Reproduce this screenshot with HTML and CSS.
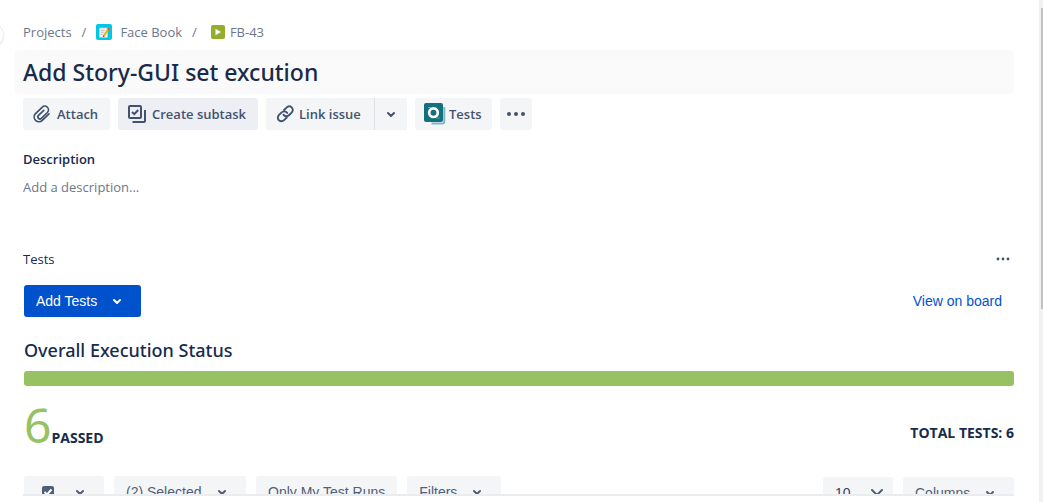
FILE: index.html
```html
<!DOCTYPE html>
<html lang="en">
<head>
<meta charset="utf-8">
<meta name="viewport" content="width=device-width, initial-scale=1">
<title>FB-43 Add Story-GUI set excution</title>
<link rel="stylesheet" href="styles.css">
</head>
<body>
<div class="page">
  <button class="nav-handle" aria-label="Expand sidebar"></button>
  <main class="issue">
    <nav class="crumbs" aria-label="Breadcrumbs">
      <a href="#">Projects</a>
      <span class="slash">/</span>
      <a href="#" class="crumb-project">
        <svg width="16" height="16" viewBox="0 0 16 16" aria-hidden="true"><rect width="16" height="16" rx="2" fill="#00c7e6"/><path d="M3.400 3.500h8.200v10H3.400z" fill="#f2f4f5"/><path d="M4 3v1.200M6 3v1.200M8 3v1.200M10 3v1.200" stroke="#6b778c" stroke-width=".8"/><path d="M4.800 6.300h4M4.800 8.300h3M4.800 10.300h2" stroke="#a5b4c2" stroke-width=".8"/><path d="M7 11.200l4.200-6.400 1.700 1.100-4.200 6.400-2 1z" fill="#ffab00"/><path d="M11.200 4.800l.8-1.200 1.700 1.100-.8 1.200z" fill="#e5493a"/><path d="M7 11.200l-.3 2 2-.9z" fill="#7a5b3a"/></svg>
        <span>Face Book</span>
      </a>
      <span class="slash slash-wide">/</span>
      <a href="#" class="crumb-issue">
        <svg width="14" height="14" viewBox="0 0 14 14" aria-hidden="true"><rect width="14" height="14" rx="2" fill="#95ad2d"/><path d="M4.500 3.800v6.400L10 7z" fill="#fff"/></svg>
        <span>FB-43</span>
      </a>
    </nav>

    <h1 class="title">Add Story-GUI set excution</h1>

    <div class="actions">
      <button class="btn btn-attach">
        <svg width="18" height="18" viewBox="0 0 18 18" fill="none" stroke="#42526e" stroke-width="1.700" stroke-linecap="round" aria-hidden="true"><path d="M16 8.800l-6.700 6.500a4.700 4.700 0 0 1-6.800-6.600l6.600-6.400a3.700 3.700 0 0 1 5.300 5.200l-6 5.800a2 2 0 0 1-2.900-2.900l5.300-5.100"/></svg>
        <span>Attach</span>
      </button>
      <button class="btn btn-subtask">
        <svg width="18" height="18" viewBox="0 0 18 18" fill="none" stroke="#42526e" stroke-width="2" aria-hidden="true"><rect x="1" y="1" width="12" height="12" rx="1"/><path d="M4 7l2.300 2.200L10.200 5M17 5v11a1 1 0 0 1-1 1H4.500"/></svg>
        <span>Create subtask</span>
      </button>
      <div class="split">
        <button class="btn btn-link">
          <svg width="19" height="18" viewBox="0 0 20 18" fill="none" stroke="#42526e" stroke-width="2" stroke-linecap="round" aria-hidden="true"><path d="M8.500 4.800l2.300-2.300c1.700-1.700 4.100-1.900 5.700-.5 1.600 1.600 1.500 4-.1 5.600l-2.500 2.500c-1.600 1.600-4 1.700-5.500.2l-.5-.6"/><path d="M11.300 12.700l-2.500 2.500c-1.700 1.700-4.100 1.800-5.700.4-1.600-1.600-1.500-4 .1-5.600l2.500-2.500c1.600-1.600 4-1.700 5.500-.2l.5.6"/></svg>
          <span>Link issue</span>
        </button>
        <button class="btn btn-caret" aria-label="More link options">
          <svg width="10" height="7" viewBox="0 0 10 7" class="chev" aria-hidden="true"><path d="M2 2l3 3 3-3"/></svg>
        </button>
      </div>
      <button class="btn btn-tests">
        <svg width="22" height="22" viewBox="0 0 22 22" aria-hidden="true"><path d="M20.300 4v14.500a2 2 0 0 1-2 2H7.500" fill="none" stroke="#7db8bf" stroke-width="2"/><rect width="19" height="19" rx="2" fill="#14707f"/><circle cx="9.500" cy="9.700" r="4.300" fill="none" stroke="#fff" stroke-width="2.700"/><path d="M4 4.500h3M12.500 15h3" stroke="#74aab2"/></svg>
        <span>Tests</span>
      </button>
      <button class="btn btn-more" aria-label="More actions">
        <svg width="20" height="6" viewBox="0 0 20 6" fill="#42526e" aria-hidden="true"><circle cx="3" cy="3" r="2"/><circle cx="10" cy="3" r="2"/><circle cx="17" cy="3" r="2"/></svg>
      </button>
    </div>

    <section class="description">
      <h2>Description</h2>
      <p>Add a description...</p>
    </section>

    <section class="tests">
      <header class="tests-head">
        <h2>Tests</h2>
        <button class="plain" aria-label="Tests menu"><svg width="14" height="4" viewBox="0 0 14 4" fill="#42526e" aria-hidden="true"><circle cx="2" cy="2" r="1.400"/><circle cx="7" cy="2" r="1.400"/><circle cx="12" cy="2" r="1.400"/></svg></button>
      </header>
      <div class="panel">
        <div class="panel-row">
          <button class="add">
            <span>Add Tests</span>
            <svg width="10" height="7" viewBox="0 0 10 7" class="chev" aria-hidden="true"><path d="M2 2l3 3 3-3"/></svg>
          </button>
          <a href="#" class="board">View on board</a>
        </div>
        <h3>Overall Execution Status</h3>
        <div class="bar" role="img" aria-label="6 of 6 passed"></div>
        <div class="totals">
          <div class="passed"><span class="count">6</span><span>PASSED</span></div>
          <div class="total">TOTAL TESTS: 6</div>
        </div>
        <div class="filters">
          <div class="tool tool-check">
            <label class="check"><input type="checkbox" checked aria-label="Select all"><svg width="12" height="12" viewBox="0 0 12 12" aria-hidden="true"><path d="M2.500 6l2.500 2.500 4.500-5"/></svg></label>
            <button class="plain" aria-label="Selection options"><svg width="10" height="7" viewBox="0 0 10 7" class="chev" aria-hidden="true"><path d="M2 2l3 3 3-3"/></svg></button>
          </div>
          <button class="tool tool-selected"><span>(2) Selected</span><svg width="10" height="7" viewBox="0 0 10 7" class="chev" aria-hidden="true"><path d="M2 2l3 3 3-3"/></svg></button>
          <button class="tool">Only My Test Runs</button>
          <button class="tool tool-filter"><span>Filters</span><svg width="10" height="7" viewBox="0 0 10 7" class="chev" aria-hidden="true"><path d="M2 2l3 3 3-3"/></svg></button>
          <div class="filters-right">
            <div class="size">
              <select aria-label="Rows per page"><option>10</option><option>25</option><option>50</option></select>
              <svg width="12" height="8" viewBox="0 0 12 8" class="chev" aria-hidden="true"><path d="M1 1l5 5 5-5"/></svg>
            </div>
            <button class="tool tool-columns"><span>Columns</span><svg width="10" height="7" viewBox="0 0 10 7" class="chev" aria-hidden="true"><path d="M2 2l3 3 3-3"/></svg></button>
          </div>
        </div>
      </div>
    </section>
  </main>
  <div class="track" aria-hidden="true"><div class="thumb"></div></div>
</div>
</body>
</html>
```

FILE: styles.css
```css
* { box-sizing: border-box; }
body {
  margin: 0;
  background: #fff;
  color: #172b4d;
  font: 13px/20px "Open Sans", "Noto Sans", sans-serif;
}
h1, h2, h3, p { margin: 0; }
button, select { font: inherit; color: inherit; border: 0; cursor: pointer; }
a { color: inherit; text-decoration: none; }
svg { display: block; flex: none; }
.chev { fill: none; stroke: currentColor; stroke-width: 2; stroke-linecap: round; stroke-linejoin: round; }
.plain { background: none; padding: 0; }

.page { display: flex; height: 100vh; overflow: hidden; position: relative; }
.nav-handle {
  position: absolute;
  left: -21px;
  top: 23px;
  width: 24px;
  height: 24px;
  padding: 0;
  border-radius: 50%;
  background: #fff;
  box-shadow: 0 0 0 1px #ebecf0, 0 2px 3px #ebecf0;
}
.issue { flex: 1; min-width: 0; display: flex; flex-direction: column; padding: 22px 25px 6px 23px; }

.crumbs { display: flex; align-items: center; color: #6b778c; }
.crumb-project, .crumb-issue { display: flex; align-items: center; }
.crumb-project { gap: 8px; }
.crumb-issue { gap: 5px; }
.slash { margin: 0 10px; }
.slash-wide { margin-right: 14px; }

.title {
  margin: 8px 0 0 -8px;
  padding: 8px;
  border-radius: 4px;
  background: #fafafa;
  font-family: "Noto Sans", "Open Sans", sans-serif;
  font-size: 23px;
  line-height: 28px;
  font-weight: 500;
}

.actions { display: flex; gap: 8px; margin-top: 4px; color: #42526e; font-weight: 600; }
.btn {
  display: flex;
  align-items: center;
  height: 32px;
  padding: 0 10px;
  gap: 6px;
  border-radius: 3px;
  background: #f4f5f7;
  white-space: nowrap;
}
.btn-attach { width: 87px; }
.btn-subtask { width: 140px; background: #eeeff4; }
.split { display: flex; gap: 1px; background: #dfe1e6; border-radius: 3px; }
.btn-link { width: 108px; gap: 4px; border-radius: 3px 0 0 3px; }
.btn-caret { width: 32px; padding: 0; justify-content: center; border-radius: 0 3px 3px 0; }
.btn-tests { width: 77px; gap: 3px; padding: 0 9px; }
.btn-more { width: 32px; padding: 0; justify-content: center; }

.description { margin-top: 19px; }
.description h2 { font-size: 13px; line-height: 20px; font-weight: 600; }
.description p { margin-top: 8px; color: #6b778c; }

.tests { flex: 1; min-height: 0; display: flex; flex-direction: column; margin-top: 52px; }
.tests-head { display: flex; justify-content: space-between; align-items: center; padding-right: 4px; }
.tests-head h2 { font-size: 13px; line-height: 20px; font-weight: 400; }
.panel { flex: 1; min-height: 0; margin-top: 16px; padding-left: 1px; overflow: hidden; border-bottom: 2px solid #ebecf0; }
.panel-row { display: flex; justify-content: space-between; align-items: center; padding-right: 12px; font: 14px/20px "Liberation Sans", Arial, sans-serif; }
.add {
  display: flex;
  align-items: center;
  gap: 15px;
  width: 117px;
  height: 32px;
  padding: 0 12px;
  border-radius: 3px;
  background: #0052cc;
  color: #fff;
}
.board { color: #0052cc; }
.panel h3 { margin-top: 21px; font-family: "Noto Sans", "Open Sans", sans-serif; font-size: 18px; line-height: 24px; font-weight: 500; }
.bar { height: 15px; margin-top: 9px; border-radius: 3px; background: #97c263; }
.totals { display: flex; justify-content: space-between; align-items: center; height: 48px; margin-top: 23px; font-size: 14px; font-weight: 700; }
.passed { display: flex; align-items: baseline; align-self: flex-start; margin-top: -8px; }
.count { color: #97c263; font-family: "Noto Sans", "Open Sans", sans-serif; font-size: 48px; line-height: 48px; font-weight: 400; }

.filters { display: flex; gap: 10px; margin-top: 19px; color: #505f79; font: 14px/20px "Liberation Sans", Arial, sans-serif; }
.tool {
  display: flex;
  align-items: center;
  justify-content: space-between;
  height: 32px;
  padding: 0 12px;
  border-radius: 3px;
  background: #f4f5f7;
  white-space: nowrap;
}
.tool-check { width: 80px; padding: 0 19px 0 18px; }
.tool-selected { width: 132px; padding-right: 19px; }
.tool-filter { width: 94px; padding-right: 19px; }
.tool-columns { width: 111px; padding-right: 19px; }
.check { display: grid; }
.check input, .check svg { grid-area: 1 / 1; }
.check input { appearance: none; width: 12px; height: 12px; margin: 0; border-radius: 2px; background: #505f79; }
.check svg { fill: none; stroke: #fff; stroke-width: 2; pointer-events: none; }
.filters-right { display: flex; gap: 10px; margin: 1px 0 0 auto; }
.size { display: grid; align-items: center; width: 70px; }
.size select, .size svg { grid-area: 1 / 1; }
.size select { appearance: none; width: 100%; height: 32px; padding: 0 12px; border-radius: 3px; background: #f4f5f7; color: #344563; }
.size svg { justify-self: end; margin-right: 10px; pointer-events: none; }

.track { width: 4px; padding: 8px 0 0 2px; background: #f1f1f1; }
.thumb { height: 301px; background: #c1c1c1; }
```
